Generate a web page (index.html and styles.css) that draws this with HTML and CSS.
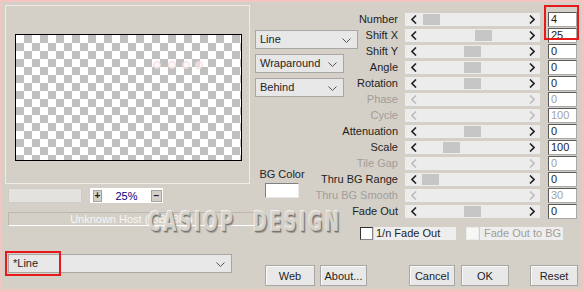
FILE: index.html
```html
<!DOCTYPE html>
<html lang="en">
<head>
  <meta charset="UTF-8">
  <title>Line settings</title>
  <link rel="stylesheet" href="styles.css">
</head>
<body>
  <div class="dialog">
    <div class="main">
      <!-- preview side -->
      <div class="left">
        <div class="frame">
          <div class="canvas">
            <span class="dot"></span><span class="dot"></span><span class="dot"></span><span class="dot"></span>
          </div>
        </div>
        <div class="zoom-row">
          <div class="zoom-bar"></div>
          <div class="zoom-field">
            <span class="mini">+</span>
            <span class="pct">25%</span>
            <span class="mini">&minus;</span>
          </div>
        </div>
        <div class="status">Unknown Host ("8BF8F")</div>
      </div>

      <div class="controls">
        <div class="mid">
          <div class="select sel-line">Line <svg class="chev" width="9" height="5" viewBox="0 0 9 5"><polyline points="0.5,0.5 4.5,4.5 8.5,0.5"/></svg></div>
          <div class="select">Wraparound <svg class="chev" width="9" height="5" viewBox="0 0 9 5"><polyline points="0.5,0.5 4.5,4.5 8.5,0.5"/></svg></div>
          <div class="select">Behind <svg class="chev" width="9" height="5" viewBox="0 0 9 5"><polyline points="0.5,0.5 4.5,4.5 8.5,0.5"/></svg></div>
          <div class="bg">
            <span>BG Color</span>
            <div class="swatch"></div>
          </div>
        </div>

        <div class="params">
          <label>Number</label>
          <div class="slider"><svg class="arr" width="6" height="9" viewBox="0 0 6 9"><polyline points="5,0.5 1,4.5 5,8.5"/></svg><span class="thumb" style="left:18px"></span><svg class="arr" width="6" height="9" viewBox="0 0 6 9"><polyline points="1,0.5 5,4.5 1,8.5"/></svg></div>
          <div class="val">4</div>

          <label>Shift X</label>
          <div class="slider"><svg class="arr" width="6" height="9" viewBox="0 0 6 9"><polyline points="5,0.5 1,4.5 5,8.5"/></svg><span class="thumb" style="left:70px"></span><svg class="arr" width="6" height="9" viewBox="0 0 6 9"><polyline points="1,0.5 5,4.5 1,8.5"/></svg></div>
          <div class="val">25</div>

          <label>Shift Y</label>
          <div class="slider"><svg class="arr" width="6" height="9" viewBox="0 0 6 9"><polyline points="5,0.5 1,4.5 5,8.5"/></svg><span class="thumb" style="left:59px"></span><svg class="arr" width="6" height="9" viewBox="0 0 6 9"><polyline points="1,0.5 5,4.5 1,8.5"/></svg></div>
          <div class="val">0</div>

          <label>Angle</label>
          <div class="slider"><svg class="arr" width="6" height="9" viewBox="0 0 6 9"><polyline points="5,0.5 1,4.5 5,8.5"/></svg><span class="thumb" style="left:59px"></span><svg class="arr" width="6" height="9" viewBox="0 0 6 9"><polyline points="1,0.5 5,4.5 1,8.5"/></svg></div>
          <div class="val">0</div>

          <label>Rotation</label>
          <div class="slider"><svg class="arr" width="6" height="9" viewBox="0 0 6 9"><polyline points="5,0.5 1,4.5 5,8.5"/></svg><span class="thumb" style="left:59px"></span><svg class="arr" width="6" height="9" viewBox="0 0 6 9"><polyline points="1,0.5 5,4.5 1,8.5"/></svg></div>
          <div class="val">0</div>

          <label class="off">Phase</label>
          <div class="slider off"><svg class="arr" width="6" height="9" viewBox="0 0 6 9"><polyline points="5,0.5 1,4.5 5,8.5"/></svg><svg class="arr" width="6" height="9" viewBox="0 0 6 9"><polyline points="1,0.5 5,4.5 1,8.5"/></svg></div>
          <div class="val off">0</div>

          <label class="off">Cycle</label>
          <div class="slider off"><svg class="arr" width="6" height="9" viewBox="0 0 6 9"><polyline points="5,0.5 1,4.5 5,8.5"/></svg><svg class="arr" width="6" height="9" viewBox="0 0 6 9"><polyline points="1,0.5 5,4.5 1,8.5"/></svg></div>
          <div class="val off">100</div>

          <label>Attenuation</label>
          <div class="slider"><svg class="arr" width="6" height="9" viewBox="0 0 6 9"><polyline points="5,0.5 1,4.5 5,8.5"/></svg><span class="thumb" style="left:59px"></span><svg class="arr" width="6" height="9" viewBox="0 0 6 9"><polyline points="1,0.5 5,4.5 1,8.5"/></svg></div>
          <div class="val">0</div>

          <label>Scale</label>
          <div class="slider"><svg class="arr" width="6" height="9" viewBox="0 0 6 9"><polyline points="5,0.5 1,4.5 5,8.5"/></svg><span class="thumb" style="left:38px"></span><svg class="arr" width="6" height="9" viewBox="0 0 6 9"><polyline points="1,0.5 5,4.5 1,8.5"/></svg></div>
          <div class="val">100</div>

          <label class="off">Tile Gap</label>
          <div class="slider off"><svg class="arr" width="6" height="9" viewBox="0 0 6 9"><polyline points="5,0.5 1,4.5 5,8.5"/></svg><svg class="arr" width="6" height="9" viewBox="0 0 6 9"><polyline points="1,0.5 5,4.5 1,8.5"/></svg></div>
          <div class="val off">0</div>

          <label>Thru BG Range</label>
          <div class="slider"><svg class="arr" width="6" height="9" viewBox="0 0 6 9"><polyline points="5,0.5 1,4.5 5,8.5"/></svg><span class="thumb" style="left:17px"></span><svg class="arr" width="6" height="9" viewBox="0 0 6 9"><polyline points="1,0.5 5,4.5 1,8.5"/></svg></div>
          <div class="val">0</div>

          <label class="off">Thru BG Smooth</label>
          <div class="slider off"><svg class="arr" width="6" height="9" viewBox="0 0 6 9"><polyline points="5,0.5 1,4.5 5,8.5"/></svg><svg class="arr" width="6" height="9" viewBox="0 0 6 9"><polyline points="1,0.5 5,4.5 1,8.5"/></svg></div>
          <div class="val off">30</div>

          <label>Fade Out</label>
          <div class="slider"><svg class="arr" width="6" height="9" viewBox="0 0 6 9"><polyline points="5,0.5 1,4.5 5,8.5"/></svg><span class="thumb" style="left:59px"></span><svg class="arr" width="6" height="9" viewBox="0 0 6 9"><polyline points="1,0.5 5,4.5 1,8.5"/></svg></div>
          <div class="val">0</div>
        </div>
      </div>
    </div>

    <div class="checks">
      <span class="box"></span><span class="check-label">1/n Fade Out</span>
      <span class="box off"></span><span class="check-label off">Fade Out to BG</span>
    </div>

    <div class="bottom">
      <div class="select preset">*Line <svg class="chev" width="9" height="5" viewBox="0 0 9 5"><polyline points="0.5,0.5 4.5,4.5 8.5,0.5"/></svg></div>
      <div class="buttons">
        <button class="btn-web">Web</button>
        <button class="btn-about">About...</button>
        <button class="btn-cancel">Cancel</button>
        <button class="btn-ok">OK</button>
        <button class="btn-reset">Reset</button>
      </div>
    </div>

    <div class="watermark">CASIOP&nbsp;&nbsp;DESIGN</div>
    <div class="mark mark-values"></div>
    <div class="mark mark-preset"></div>
  </div>
</body>
</html>
```

FILE: styles.css
```css
body {
  margin: 0;
  font-family: "Liberation Sans", Arial, sans-serif;
  font-size: 11px;
  color: #1e1e1e;
}
.dialog {
  position: relative;
  width: 584px;
  height: 292px;
  box-sizing: border-box;
  background: #d4d0c8;
  border: 2px solid #f3c4c0;
  border-right-width: 3px;
  border-bottom-width: 3px;
  overflow: hidden;
}
.main {
  display: flex;
  padding: 3px 4px 0 3px;
}
.left {
  width: 250px;
  flex: none;
}
.frame {
  width: 245px;
  height: 179px;
  box-sizing: border-box;
  border: 1px solid #efece6;
  padding: 28px 0 0 9px;
}
.canvas {
  position: relative;
  width: 227px;
  height: 127px;
  box-sizing: border-box;
  border: 1px solid #000;
  background-color: #fff;
  background-image: conic-gradient(#c0c0c0 25%, #fff 0 50%, #c0c0c0 0 75%, #fff 0);
  background-size: 16px 16px;
}
.dot {
  position: absolute;
  top: 26px;
  width: 6px;
  height: 6px;
  border-radius: 50%;
  border: 1px solid #f1dcdc;
  background: rgba(255, 240, 240, 0.6);
}
.dot:nth-child(1) { left: 137px; }
.dot:nth-child(2) { left: 152px; }
.dot:nth-child(3) { left: 166px; }
.dot:nth-child(4) { left: 179px; }
.zoom-row {
  display: flex;
  gap: 8px;
  margin: 4px 0 0 3px;
  height: 15px;
}
.zoom-bar {
  width: 74px;
  background: #e4e2de;
  border: 1px solid #cfccc5;
  box-sizing: border-box;
}
.zoom-field {
  width: 73px;
  background: #fff;
  display: flex;
  align-items: center;
  padding: 0 1px 0 3px;
  box-sizing: border-box;
}
.mini {
  width: 9px;
  height: 12px;
  box-sizing: border-box;
  background: #d4d0c8;
  border: 1px solid #a7a49d;
  font-size: 10px;
  font-weight: bold;
  line-height: 10px;
  text-align: center;
}
.mini:last-child { width: 11px; }
.pct {
  flex: 1;
  text-align: center;
  color: #000080;
}
.status {
  margin: 9px 0 0 3px;
  width: 247px;
  height: 14px;
  box-sizing: border-box;
  border: 1px solid #bcb8b0;
  border-bottom-color: #fff;
  border-right-color: #fff;
  color: #f6f6f6;
  text-align: center;
  line-height: 12px;
}
.controls {
  flex: 1;
  display: grid;
}
.controls > * {
  grid-area: 1 / 1;
}
.mid {
  justify-self: start;
  padding-top: 25px;
}
.select {
  position: relative;
  width: 89px;
  height: 19px;
  box-sizing: border-box;
  background: #e7e7e7;
  border: 1px solid #a9a7a3;
  padding-left: 4px;
  line-height: 17px;
  margin-bottom: 5px;
}
.sel-line { width: 103px; }
.chev {
  position: absolute;
  right: 6px;
  top: 7px;
  fill: none;
  stroke: #555;
  stroke-width: 1;
}
.bg {
  width: 40px;
  margin: 71px 0 0 7px;
  display: flex;
  flex-direction: column;
  align-items: center;
  white-space: nowrap;
}
.swatch {
  width: 34px;
  height: 15px;
  margin-top: 3px;
  box-sizing: border-box;
  background: #fff;
  border: 1px solid #808080;
  border-right-color: #e8e8e8;
  border-bottom-color: #e8e8e8;
}
.params {
  justify-self: end;
  margin-top: 6px;
  display: grid;
  grid-template-columns: auto 135px 30px;
  grid-auto-rows: 16px;
  column-gap: 7px;
  align-items: center;
}
.params label {
  text-align: right;
  white-space: nowrap;
}
.params label.off { color: #a09e9a; }
.slider {
  position: relative;
  height: 13px;
  background: #ececec;
  display: flex;
  align-items: center;
  justify-content: space-between;
  padding: 0 5px 0 6px;
}
.arr {
  fill: none;
  stroke: #222;
  stroke-width: 1.6;
}
.slider.off .arr { stroke: #bdbdbd; }
.thumb {
  position: absolute;
  top: 1px;
  width: 17px;
  height: 11px;
  background: #c6c6c6;
}
.val {
  height: 15px;
  box-sizing: border-box;
  margin-left: 1px;
  background: #fff;
  border: 1px solid #5a5a5a;
  border-right-color: #a8a8a8;
  border-bottom-color: #a8a8a8;
  padding-left: 2px;
  line-height: 13px;
}
.val.off { color: #a2a2a2; }
.checks {
  display: flex;
  align-items: center;
  height: 13px;
  margin: 1px 0 0 358px;
}
.box {
  width: 13px;
  height: 13px;
  box-sizing: border-box;
  background: #fff;
  border: 1px solid #333;
  border-right-color: #888;
  border-bottom-color: #888;
}
.box.off {
  margin-left: 10px;
  border-color: #ececec;
  background: #f7f7f7;
}
.check-label {
  width: 82px;
  height: 13px;
  margin-left: 1px;
  padding-left: 2px;
  box-sizing: border-box;
  background: #eeeeee;
  line-height: 13px;
  white-space: nowrap;
}
.check-label.off {
  width: 83px;
  color: #a09e9a;
  padding-left: 4px;
}
.bottom {
  display: flex;
  align-items: flex-start;
  margin: 14px 0 0 6px;
}
.preset {
  width: 224px;
  margin-bottom: 0;
}
.buttons {
  display: flex;
  margin: 11px 0 0 33px;
}
button {
  height: 21px;
  box-sizing: border-box;
  padding: 0;
  font-family: "Liberation Sans", Arial, sans-serif;
  font-size: 11px;
  color: #1e1e1e;
  background: #e8e8e8;
  border: 1px solid #a9a7a3;
  box-shadow: inset 1px 1px #fafafa;
}
.btn-web { width: 50px; }
.btn-about { width: 47px; margin-left: 5px; }
.btn-cancel { width: 46px; margin-left: 42px; }
.btn-ok { width: 48px; margin-left: 6px; }
.btn-reset { width: 48px; margin-left: 21px; }
.watermark {
  position: absolute;
  left: 146px;
  top: 205px;
  font-family: "DejaVu Sans", sans-serif;
  font-weight: bold;
  font-size: 26px;
  letter-spacing: 4px;
  transform: scaleX(0.66);
  transform-origin: left top;
  color: rgba(214, 210, 202, 0.85);
  text-shadow: -1px -1px 0 rgba(255, 255, 255, 0.7), 1px 1px 0 #767470, 2px 2px 1px rgba(90, 90, 90, 0.45);
  white-space: nowrap;
}
.mark {
  position: absolute;
  border: 2px solid #e8191b;
}
.mark-values {
  left: 542px;
  top: 3px;
  width: 31px;
  height: 31px;
}
.mark-preset {
  left: 3px;
  top: 249px;
  width: 52px;
  height: 21px;
}
```
